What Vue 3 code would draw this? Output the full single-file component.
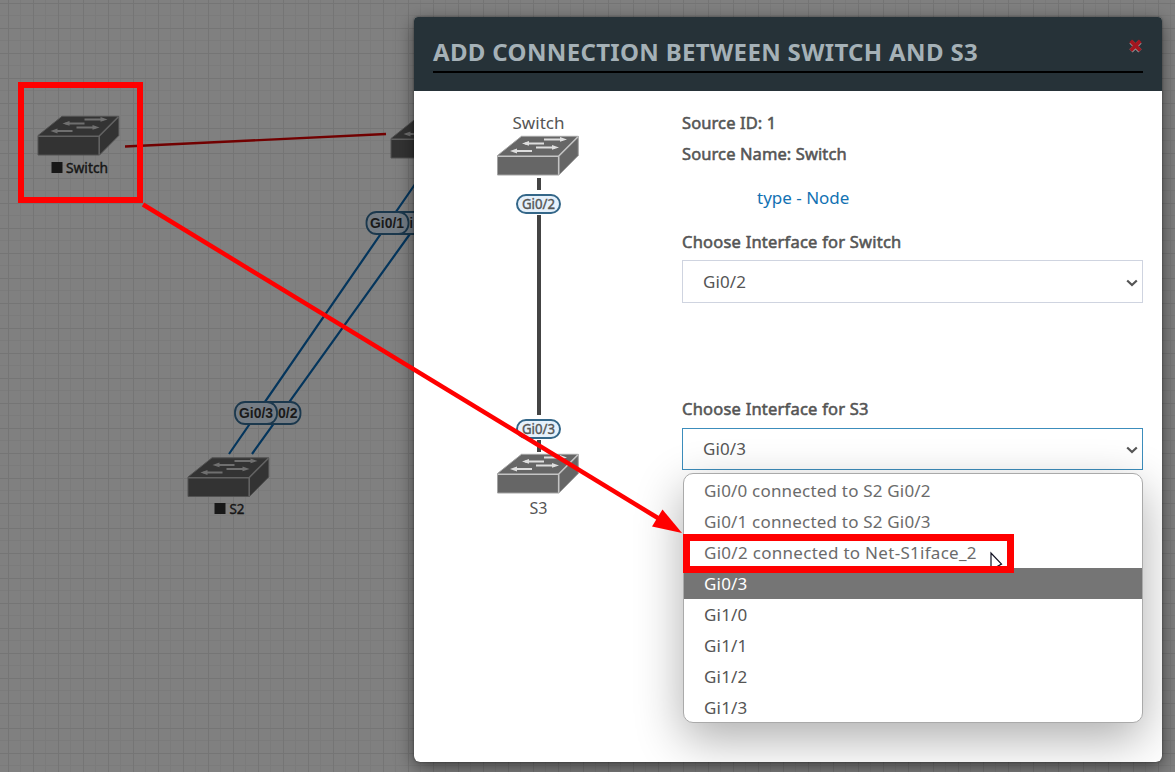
<script setup>
const canvasNodes = [
  { x: 37.5, y: 115.5, name: 'Switch', sx: 51.5, tx: 66, ty: 173, len: 42 },
  { x: 187.5, y: 457, name: 'S2', sx: 214.5, tx: 229.5, ty: 514, len: 15 },
  { x: 390.5, y: 118.5, name: '' },
]
const canvasPorts = [
  { x: 391, y: 212, label: 'i', tx: 409.5, len: 3.5 },
  { x: 366.5, y: 212, label: 'Gi0/1', tx: 370, len: 34 },
  { x: 258.5, y: 402, label: '0/2', tx: 278, len: 19.5 },
  { x: 235, y: 402, label: 'Gi0/3', tx: 239, len: 34 },
]
const options = [
  { text: 'Gi0/0 connected to S2 Gi0/2', cls: 'used' },
  { text: 'Gi0/1 connected to S2 Gi0/3', cls: 'used' },
  { text: 'Gi0/2 connected to Net-S1iface_2', cls: 'used wide' },
  { text: 'Gi0/3', cls: 'active' },
  { text: 'Gi1/0', cls: '' },
  { text: 'Gi1/1', cls: '' },
  { text: 'Gi1/2', cls: '' },
  { text: 'Gi1/3', cls: '' },
]
</script>

<template>
  <div class="stage">
    <svg class="canvas" width="1175" height="772">
      <defs>
        <g id="switch-icon">
          <path class="face" d="M.5 20 24.5.8H81.3V20L62 39.5H.5Z" />
          <path class="edge" d="M.5 20 24.5.8H81.3V20L62 39.5H.5Z" />
          <path class="rim" d="M.8 20.7H61.5L81 1.2M61.7 20.7V39.2" />
          <g class="arrows">
            <path d="M47 3.9H66M47 7.9H28M39 11.9H58M35 15.5H16" />
            <path class="tips" d="M70 3.9 63 1.5V6.3ZM25 7.9 32 5.5V10.3ZM62 11.9 55 9.5V14.3ZM13 15.5 20 13.1V17.9Z" />
          </g>
        </g>
      </defs>
      <path class="link-red" d="M125 146.5 386 134" />
      <path class="link-blue" d="M229 454 420 177M252 454 420 220" />
      <g v-for="p in canvasPorts" :key="p.x">
        <rect class="port" :x="p.x" :y="p.y" width="42" height="22" rx="10" />
        <text class="port-text" :x="p.tx" :y="p.y + 16" :textLength="p.len" lengthAdjust="spacingAndGlyphs">{{ p.label }}</text>
      </g>
      <g v-for="n in canvasNodes" :key="n.x">
        <use class="dim" href="#switch-icon" :x="n.x" :y="n.y" />
        <template v-if="n.name">
          <rect class="status" :x="n.sx" :y="n.ty - 11" width="11" height="11" />
          <text class="node-text" :x="n.tx" :y="n.ty" :textLength="n.len" lengthAdjust="spacingAndGlyphs">{{ n.name }}</text>
        </template>
      </g>
    </svg>

    <section class="dialog">
      <header class="head">
        <h1><span>ADD CONNECTION BETWEEN SWITCH AND S3</span></h1>
        <svg class="close" width="15" height="16" viewBox="0 0 15 16">
          <path class="halo" d="M3 3.9 12 12.9M12 3.9 3 12.9" />
          <path class="cross" d="M2.7 2.9 12.3 12.5M12.3 2.9 2.7 12.5" />
        </svg>
      </header>
      <div class="body">
        <svg class="diagram" width="249" height="440">
          <text class="name" x="79.5" y="37.5" textLength="52" lengthAdjust="spacingAndGlyphs">Switch</text>
          <use href="#switch-icon" x="64" y="44.5" />
          <path class="wire" d="M106 87V99M106 124V324M106 349V361" />
          <rect class="badge" x="84" y="104" width="43" height="18" rx="9" />
          <text class="badge-text" x="89" y="118" textLength="33" lengthAdjust="spacingAndGlyphs">Gi0/2</text>
          <rect class="badge" x="84" y="329" width="43" height="18" rx="9" />
          <text class="badge-text" x="89" y="343" textLength="33" lengthAdjust="spacingAndGlyphs">Gi0/3</text>
          <use href="#switch-icon" x="64" y="362.5" />
          <text class="name" x="96.5" y="423" textLength="18" lengthAdjust="spacingAndGlyphs">S3</text>
        </svg>
        <div class="form">
          <p class="strong">Source ID: 1</p>
          <p class="strong">Source Name: Switch</p>
          <p class="type">type - Node</p>
          <label class="strong">Choose Interface for Switch</label>
          <div class="select">
            <span>Gi0/2</span>
            <svg width="12" height="8"><path d="M1.2 1.5 6 6 10.8 1.5" /></svg>
          </div>
          <label class="strong second">Choose Interface for S3</label>
          <div class="select focus">
            <span>Gi0/3</span>
            <svg width="12" height="8"><path d="M1.2 1.5 6 6 10.8 1.5" /></svg>
          </div>
          <ul class="menu">
            <li v-for="o in options" :key="o.text" :class="o.cls">{{ o.text }}</li>
          </ul>
        </div>
      </div>
    </section>

    <svg class="notes" width="1175" height="772">
      <path class="cursor" d="M991 553V570L1001.5 564Z" />
      <rect class="cover" x="988" y="567" width="18" height="5" />
      <rect x="21" y="85" width="119" height="115" stroke-width="6" />
      <rect x="686.5" y="537.5" width="324" height="32" stroke-width="7" />
      <path d="M143 204.5 662 520.5" stroke-width="4.5" />
      <path class="tip" d="M682 533 662.5 509.5 652 526.5Z" />
    </svg>
  </div>
</template>

<style>
body { margin: 0; overflow: hidden; }
</style>

<style scoped>
.stage {
  position: relative;
  width: 1175px;
  height: 772px;
  overflow: hidden;
  font-family: "Noto Sans", "Open Sans", sans-serif;
  background-color: #808080;
  background-image:
    linear-gradient(90deg, #757575 1px, transparent 1px),
    linear-gradient(#757575 1px, transparent 1px),
    linear-gradient(90deg, #7b7b7b 1px, transparent 1px),
    linear-gradient(#7b7b7b 1px, transparent 1px);
  background-size: 25px 25px;
  background-position: 8px 0, 0 3px, 20px 0, 0 15px;
}
.canvas, .notes { position: absolute; left: 0; top: 0; }
.face { fill: #666; }
.edge { fill: none; stroke: #a3a3a3; stroke-width: 1; }
.rim { fill: none; stroke: #c4c4c4; stroke-width: 1.6; }
.arrows { fill: none; stroke: #dedede; stroke-width: 2; }
.tips { fill: #dedede; stroke: none; }
.dim { filter: brightness(.5); }
.link-red { stroke: #710000; stroke-width: 2.3; }
.link-blue { fill: none; stroke: #04355c; stroke-width: 2.2; }
.port { fill: #747c84; stroke: #1b384d; stroke-width: 1.8; }
.port-text { font: bold 14px "Liberation Sans", sans-serif; fill: #1a1a1a; }
.status { fill: #181818; }
.node-text { font-size: 13.5px; fill: #151515; stroke: #151515; stroke-width: .4; }
.dialog {
  position: absolute;
  left: 414px;
  top: 17px;
  width: 748px;
  height: 745px;
  border-radius: 4px 4px 6px 6px;
  background: #fff;
  overflow: hidden;
}
.stage::after {
  content: "";
  position: absolute;
  left: 414px;
  top: 17px;
  width: 748px;
  height: 745px;
  border-radius: 4px 4px 6px 6px;
  box-shadow: 0 5px 18px rgba(0, 0, 0, .5), 0 0 2px rgba(0, 0, 0, .5);
  pointer-events: none;
}
.head {
  display: flex;
  box-sizing: border-box;
  height: 74px;
  padding: 16px 19px 0;
  background: #263238;
  position: relative;
}
h1 {
  flex: 1;
  height: 38px;
  margin: 0;
  border-bottom: 2px solid #000;
  font-size: 24px;
  line-height: 38px;
  font-weight: 700;
  color: #a5b1b7;
  white-space: nowrap;
  letter-spacing: .34px;
}
.close { position: absolute; right: 19px; top: 21px; }
.halo { stroke: #8d9499; stroke-width: 4.6; }
.cross { stroke: #a3161f; stroke-width: 3.8; }
.body { display: flex; padding: 0 19px; height: 671px; }
.diagram { flex: none; }
.name { font-size: 17px; fill: #555; }
.wire { stroke: #444; stroke-width: 4; }
.badge { fill: #e6f1fb; stroke: #346789; stroke-width: 2; }
.badge-text { font-size: 14px; fill: #555; stroke: #555; stroke-width: .4; }
.form { flex: 1; padding-top: 16px; color: #555; font-size: 17px; }
p { margin: 0; height: 31px; line-height: 31px; }
label { display: block; height: 31px; line-height: 31px; }
.strong { font-size: 16.5px; letter-spacing: .1px; -webkit-text-stroke: .55px #555; }
label.strong { letter-spacing: .22px; }
.type { margin: 13px 0; padding-left: 75px; color: #1272b3; }
.select {
  display: flex;
  justify-content: space-between;
  align-items: center;
  box-sizing: border-box;
  height: 43px;
  margin-top: 3px;
  padding: 0 4px 0 20px;
  border: 1px solid #cfd4e0;
}
.select svg { fill: none; stroke: #555; stroke-width: 2.2; position: relative; top: 1px; }
.select.focus { height: 42px; margin-top: 4px; border-color: #3c8dbc; }
.select.focus span { margin-top: -1px; }
.select span { letter-spacing: .1px; }
.second { margin-top: 90px; }
.menu {
  box-sizing: border-box;
  width: 460px;
  height: 250px;
  margin: 3px 0 0 1px;
  padding: 1px 0 0;
  list-style: none;
  border: 1px solid #aaa;
  border-radius: 10px;
  background: #fff;
  box-shadow: 0 16px 48px rgba(0, 0, 0, .32);
}
li { height: 31px; line-height: 31px; padding-left: 20px; white-space: nowrap; letter-spacing: .19px; }
.used { color: #6b6b6b; }
.wide { letter-spacing: .29px; }
.active { background: #757575; color: #fff; }
.notes { z-index: 2; fill: none; stroke: #f00; }
.notes .tip { fill: #f00; stroke: none; }
.notes .cursor { fill: #fff; stroke: #112; stroke-width: 1.2; }
.notes .cover { fill: #f00; stroke: none; }
</style>
